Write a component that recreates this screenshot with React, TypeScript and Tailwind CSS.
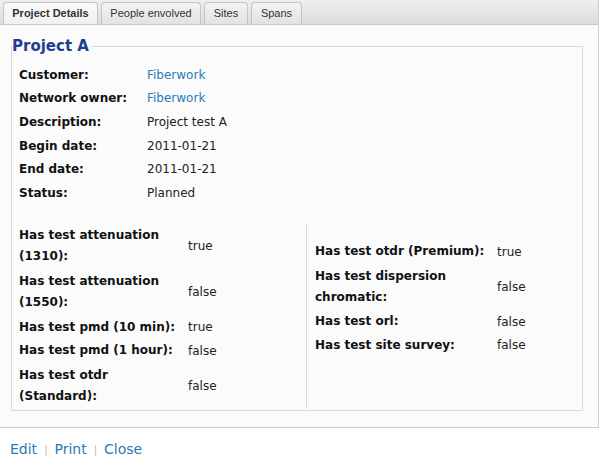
import React from "react";

const topRows: [string, string, boolean][] = [
  ["Customer:", "Fiberwork", true],
  ["Network owner:", "Fiberwork", true],
  ["Description:", "Project test A", false],
  ["Begin date:", "2011-01-21", false],
  ["End date:", "2011-01-21", false],
  ["Status:", "Planned", false],
];

const leftRows: [string, string, boolean][] = [
  ["Has test attenuation (1310):", "true", true],
  ["Has test attenuation (1550):", "false", true],
  ["Has test pmd (10 min):", "true", false],
  ["Has test pmd (1 hour):", "false", false],
  ["Has test otdr (Standard):", "false", true],
];

const rightRows: [string, string, boolean][] = [
  ["Has test otdr (Premium):", "true", false],
  ["Has test dispersion chromatic:", "false", true],
  ["Has test orl:", "false", false],
  ["Has test site survey:", "false", false],
];

function Tab({ label, active, w }: { label: string; active?: boolean; w: string }) {
  return (
    <div
      className={
        "h-[22px] flex items-center justify-center rounded-t-[4px] border border-b-0 border-[#c4c4c4] text-[11px] text-[#333] font-['Liberation_Sans',Arial,sans-serif] " +
        w +
        (active
          ? " font-bold bg-gradient-to-b from-[#fafafa] to-[#f0f0f0]"
          : " bg-gradient-to-b from-[#f3f3f3] to-[#e2e2e2]")
      }
    >
      {label}
    </div>
  );
}

function BoolRow({ label, value, double, labelW }: { label: string; value: string; double: boolean; labelW: string }) {
  return (
    <div className={"flex items-center " + (double ? "h-[46.5px]" : "h-[23.5px]")}>
      <div className={"shrink-0 font-bold leading-[21px] text-[#111] pr-[4px] " + labelW}>{label}</div>
      <div className="text-[#222]">{value}</div>
    </div>
  );
}

export default function App() {
  return (
    <div className="w-[605px] h-[464px] bg-white font-['DejaVu_Sans',Verdana,sans-serif] text-[12px] overflow-hidden">
      <div className="w-[599px] border-r border-b border-[#cdcdcd] bg-[#fbfbfb]">
        <div className="h-[25px] flex items-end gap-[3px] pl-[3px] border-b border-[#c8c8c8] bg-gradient-to-b from-[#efefef] to-[#dcdcdc]">
          <Tab label="Project Details" active w="w-[95px]" />
          <Tab label="People envolved" w="w-[100px]" />
          <Tab label="Sites" w="w-[44px]" />
          <Tab label="Spans" w="w-[51px]" />
        </div>
        <div className="pt-[12px] pb-[16px]">
          <fieldset className="ml-[11px] w-[572px] border border-[#d9d9d9] px-0 pb-[1px]">
            <legend className="text-[15px] leading-[18px] font-bold text-[#1d3f8e] pr-[3px]">Project A</legend>
            <div className="mt-[8px] pl-[7px]">
              {topRows.map(([l, v, link]) => (
                <div key={l} className="flex items-center h-[23.6px]">
                  <div className="w-[128px] shrink-0 font-bold text-[#111]">{l}</div>
                  <div className={link ? "text-[#2a7ab8]" : "text-[#222]"}>{v}</div>
                </div>
              ))}
            </div>
            <div className="mt-[18px] grid grid-cols-[294px_1fr]">
              <div className="pl-[7px]">
                {leftRows.map(([l, v, d]) => (
                  <BoolRow key={l} label={l} value={v} double={d} labelW="w-[169px]" />
                ))}
              </div>
              <div className="border-l border-[#d9d9d9] pl-[8px] pt-[17.5px]">
                {rightRows.map(([l, v, d]) => (
                  <BoolRow key={l} label={l} value={v} double={d} labelW="w-[182px]" />
                ))}
              </div>
            </div>
          </fieldset>
        </div>
      </div>
      <div className="mt-[13px] pl-[10px] flex items-center text-[14px] leading-[17px] text-[#2a7ab8]">
        <span>Edit</span>
        <span className="mx-[7px] text-[10px] text-[#b5b5b5]">|</span>
        <span>Print</span>
        <span className="mx-[7px] text-[10px] text-[#b5b5b5]">|</span>
        <span>Close</span>
      </div>
    </div>
  );
}
